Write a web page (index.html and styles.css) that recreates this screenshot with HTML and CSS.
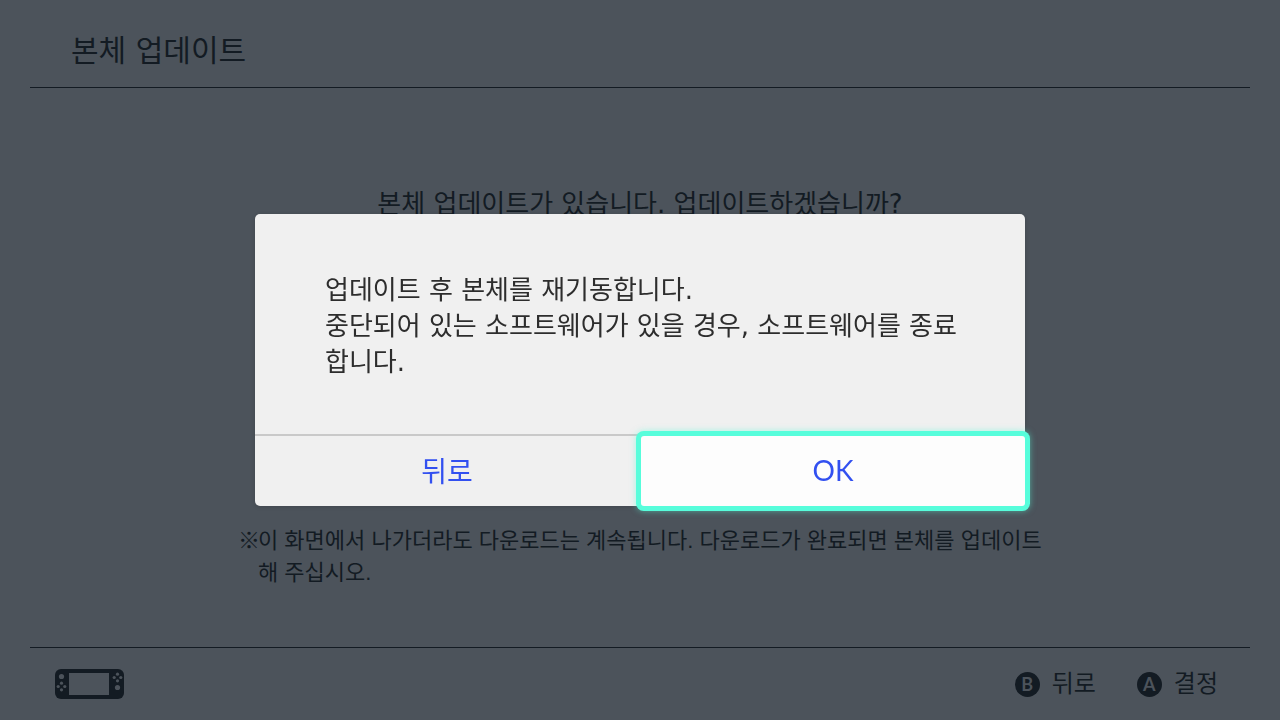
FILE: index.html
```html
<!DOCTYPE html>
<html lang="ko">
<head>
    <meta charset="UTF-8">
    <meta name="viewport" content="width=device-width, initial-scale=1.0">
    <title>본체 업데이트</title>
    <link rel="stylesheet" href="styles.css">
</head>
<body>
    <div class="screen">
        <header class="header">
            <h1>본체 업데이트</h1>
        </header>

        <main class="content">
            <p class="prompt">본체 업데이트가 있습니다. 업데이트하겠습니까?</p>
            <div class="note">
                <span class="note-mark">※</span>
                <p>이 화면에서 나가더라도 다운로드는 계속됩니다. 다운로드가 완료되면 본체를 업데이트해 주십시오.</p>
            </div>
        </main>

        <footer class="footer">
            <svg class="console" width="69" height="30" viewBox="0 0 69 30" aria-hidden="true">
                <rect class="console-body" width="69" height="30" rx="6"/>
                <rect class="console-cut" x="14" y="4" width="40" height="22"/>
                <g class="console-cut">
                    <circle cx="6.5" cy="7.5" r="2.6"/>
                    <circle cx="6.5" cy="14.2" r="1.6"/>
                    <circle cx="6.5" cy="20.8" r="1.6"/>
                    <circle cx="3.2" cy="17.5" r="1.6"/>
                    <circle cx="9.8" cy="17.5" r="1.6"/>
                    <circle cx="62.5" cy="18.5" r="2.6"/>
                    <circle cx="62.5" cy="5.2" r="1.6"/>
                    <circle cx="62.5" cy="11.8" r="1.6"/>
                    <circle cx="59.2" cy="8.5" r="1.6"/>
                    <circle cx="65.8" cy="8.5" r="1.6"/>
                </g>
            </svg>
            <div class="hints">
                <button class="hint" type="button"><span class="key">B</span>뒤로</button>
                <button class="hint" type="button"><span class="key">A</span>결정</button>
            </div>
        </footer>
    </div>

    <div class="overlay">
        <div class="dialog" role="dialog" aria-modal="true" aria-labelledby="message">
            <p class="message" id="message">업데이트 후 본체를 재기동합니다.<br>중단되어 있는 소프트웨어가 있을 경우, 소프트웨어를 종료합니다.</p>
            <div class="actions">
                <button class="action" type="button">뒤로</button>
                <button class="action selected" type="button">OK</button>
            </div>
        </div>
    </div>
</body>
</html>
```
FILE: styles.css
```css
* {
    box-sizing: border-box;
}

body {
    margin: 0;
    background-color: #4c535b;
    color: #131b23;
    font-family: "DejaVu Sans", "Noto Sans CJK KR", sans-serif;
}

h1, p {
    margin: 0;
    font-weight: normal;
}

button {
    border: none;
    padding: 0;
    background: none;
    color: inherit;
    font-family: inherit;
    cursor: pointer;
}

.screen {
    display: flex;
    flex-direction: column;
    min-height: 100vh;
    padding: 0 30px;
}

.header {
    padding: 31px 41px 16px;
    border-bottom: 1px solid #131b23;
}

.header h1 {
    font-size: 30px;
    line-height: 40px;
}

.content {
    flex: 1;
    display: flex;
    flex-direction: column;
    align-items: center;
    justify-content: space-between;
    padding: 98px 0 58px;
}

.prompt {
    font-size: 26px;
    line-height: 36px;
}

.note {
    display: flex;
    max-width: 804px;
    font-family: "Liberation Sans", "Noto Sans CJK KR", sans-serif;
    font-size: 22px;
    line-height: 32px;
}

.note-mark {
    flex: none;
    width: 20px;
}

.footer {
    display: flex;
    align-items: center;
    justify-content: space-between;
    height: 73px;
    padding: 0 32px 0 25px;
    border-top: 1px solid #131b23;
}

.console-body {
    fill: #131b23;
}

.console-cut {
    fill: #4c535b;
}

.hints {
    display: flex;
    gap: 41px;
}

.hint {
    display: flex;
    align-items: center;
    gap: 12px;
    font-size: 24px;
    line-height: 32px;
}

.key {
    width: 25px;
    height: 25px;
    border-radius: 50%;
    background-color: #131b23;
    color: #4c535b;
    font-family: Lato, sans-serif;
    font-size: 18px;
    font-weight: bold;
    line-height: 25px;
    text-align: center;
}

.overlay {
    position: fixed;
    inset: 0;
    display: flex;
    align-items: center;
    justify-content: center;
}

.dialog {
    width: 770px;
    max-width: 100%;
    border-radius: 5px;
    background-color: #f0f0f0;
    color: #2d2d2d;
    box-shadow: 0 1px 4px rgba(0, 0, 0, 0.15);
}

.message {
    padding: 58px 60px 54px 70px;
    font-size: 26px;
    line-height: 36px;
}

.actions {
    display: flex;
    gap: 2px;
    border-top: 2px solid #c9c9c9;
}

.action {
    flex: 1;
    height: 70px;
    padding-bottom: 2px;
    color: #3250f0;
    font-family: Lato, "Noto Sans CJK KR", sans-serif;
    font-size: 28px;
}

.selected {
    border-radius: 3px;
    background-color: #fdfdfd;
    box-shadow: 0 0 0 5px #57fddb, 0 0 6px 5px rgba(87, 253, 219, 0.5);
}
```
